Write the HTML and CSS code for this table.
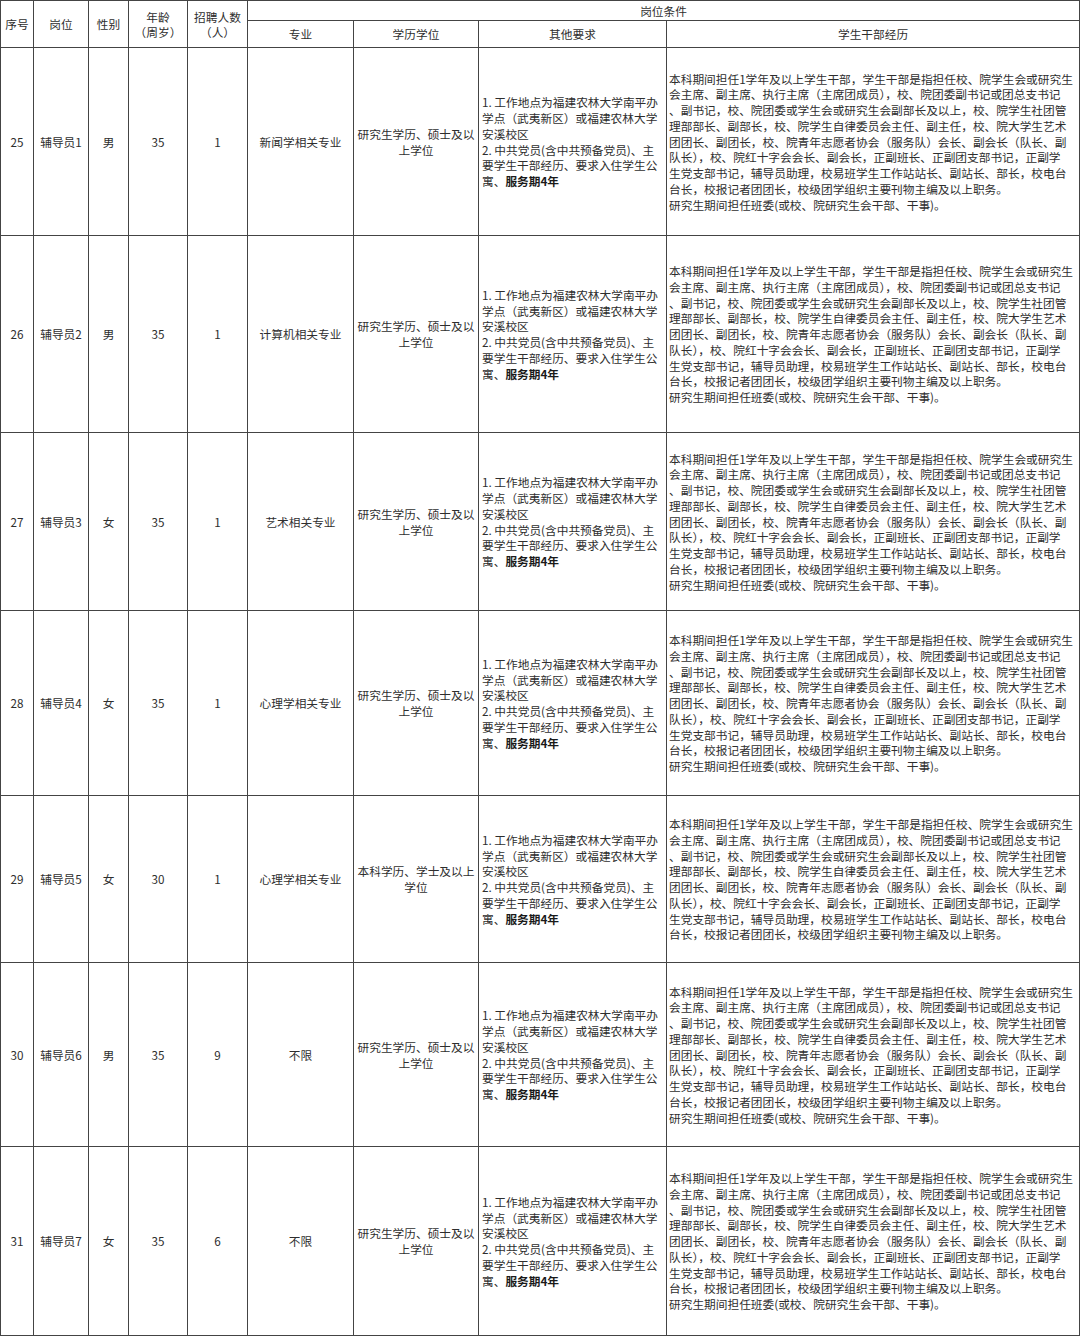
FILE: index.html
```html
<!DOCTYPE html>
<html lang="zh-CN">
<head>
<meta charset="utf-8">
<title>岗位表</title>
<link rel="stylesheet" href="styles.css">
</head>
<body>
<table class="jobs">
  <colgroup>
    <col class="c-no"><col class="c-post"><col class="c-sex"><col class="c-age"><col class="c-num">
    <col class="c-major"><col class="c-edu"><col class="c-other"><col class="c-exp">
  </colgroup>
  <thead>
    <tr class="h1">
      <th rowspan="2">序号</th>
      <th rowspan="2">岗位</th>
      <th rowspan="2">性别</th>
      <th rowspan="2" class="two">年龄<br>（周岁）</th>
      <th rowspan="2" class="two">招聘人数<br>（人）</th>
      <th colspan="4" class="group">岗位条件</th>
    </tr>
    <tr class="h2">
      <th>专业</th>
      <th>学历学位</th>
      <th>其他要求</th>
      <th>学生干部经历</th>
    </tr>
  </thead>
  <tbody>
    <tr class="r25">
      <td>25</td><td>辅导员1</td><td>男</td><td>35</td><td>1</td>
      <td>新闻学相关专业</td>
      <td>研究生学历、硕士及以<br>上学位</td>
      <td class="other">1. 工作地点为福建农林大学南平办<br>学点（武夷新区）或福建农林大学<br>安溪校区<br>2. 中共党员(含中共预备党员)、主<br>要学生干部经历、要求入住学生公<br>寓、<b>服务期4年</b></td>
      <td class="exp">本科期间担任1学年及以上学生干部，学生干部是指担任校、院学生会或研究生<br>会主席、副主席、执行主席（主席团成员），校、院团委副书记或团总支书记<br>、副书记，校、院团委或学生会或研究生会副部长及以上，校、院学生社团管<br>理部部长、副部长，校、院学生自律委员会主任、副主任，校、院大学生艺术<br>团团长、副团长，校、院青年志愿者协会（服务队）会长、副会长（队长、副<br>队长），校、院红十字会会长、副会长，正副班长、正副团支部书记，正副学<br>生党支部书记，辅导员助理，校易班学生工作站站长、副站长、部长，校电台<br>台长，校报记者团团长，校级团学组织主要刊物主编及以上职务。<br>研究生期间担任班委(或校、院研究生会干部、干事)。</td>
    </tr>
    <tr class="r26">
      <td>26</td><td>辅导员2</td><td>男</td><td>35</td><td>1</td>
      <td>计算机相关专业</td>
      <td>研究生学历、硕士及以<br>上学位</td>
      <td class="other">1. 工作地点为福建农林大学南平办<br>学点（武夷新区）或福建农林大学<br>安溪校区<br>2. 中共党员(含中共预备党员)、主<br>要学生干部经历、要求入住学生公<br>寓、<b>服务期4年</b></td>
      <td class="exp">本科期间担任1学年及以上学生干部，学生干部是指担任校、院学生会或研究生<br>会主席、副主席、执行主席（主席团成员），校、院团委副书记或团总支书记<br>、副书记，校、院团委或学生会或研究生会副部长及以上，校、院学生社团管<br>理部部长、副部长，校、院学生自律委员会主任、副主任，校、院大学生艺术<br>团团长、副团长，校、院青年志愿者协会（服务队）会长、副会长（队长、副<br>队长），校、院红十字会会长、副会长，正副班长、正副团支部书记，正副学<br>生党支部书记，辅导员助理，校易班学生工作站站长、副站长、部长，校电台<br>台长，校报记者团团长，校级团学组织主要刊物主编及以上职务。<br>研究生期间担任班委(或校、院研究生会干部、干事)。</td>
    </tr>
    <tr class="r27">
      <td>27</td><td>辅导员3</td><td>女</td><td>35</td><td>1</td>
      <td>艺术相关专业</td>
      <td>研究生学历、硕士及以<br>上学位</td>
      <td class="other">1. 工作地点为福建农林大学南平办<br>学点（武夷新区）或福建农林大学<br>安溪校区<br>2. 中共党员(含中共预备党员)、主<br>要学生干部经历、要求入住学生公<br>寓、<b>服务期4年</b></td>
      <td class="exp">本科期间担任1学年及以上学生干部，学生干部是指担任校、院学生会或研究生<br>会主席、副主席、执行主席（主席团成员），校、院团委副书记或团总支书记<br>、副书记，校、院团委或学生会或研究生会副部长及以上，校、院学生社团管<br>理部部长、副部长，校、院学生自律委员会主任、副主任，校、院大学生艺术<br>团团长、副团长，校、院青年志愿者协会（服务队）会长、副会长（队长、副<br>队长），校、院红十字会会长、副会长，正副班长、正副团支部书记，正副学<br>生党支部书记，辅导员助理，校易班学生工作站站长、副站长、部长，校电台<br>台长，校报记者团团长，校级团学组织主要刊物主编及以上职务。<br>研究生期间担任班委(或校、院研究生会干部、干事)。</td>
    </tr>
    <tr class="r28">
      <td>28</td><td>辅导员4</td><td>女</td><td>35</td><td>1</td>
      <td>心理学相关专业</td>
      <td>研究生学历、硕士及以<br>上学位</td>
      <td class="other">1. 工作地点为福建农林大学南平办<br>学点（武夷新区）或福建农林大学<br>安溪校区<br>2. 中共党员(含中共预备党员)、主<br>要学生干部经历、要求入住学生公<br>寓、<b>服务期4年</b></td>
      <td class="exp">本科期间担任1学年及以上学生干部，学生干部是指担任校、院学生会或研究生<br>会主席、副主席、执行主席（主席团成员），校、院团委副书记或团总支书记<br>、副书记，校、院团委或学生会或研究生会副部长及以上，校、院学生社团管<br>理部部长、副部长，校、院学生自律委员会主任、副主任，校、院大学生艺术<br>团团长、副团长，校、院青年志愿者协会（服务队）会长、副会长（队长、副<br>队长），校、院红十字会会长、副会长，正副班长、正副团支部书记，正副学<br>生党支部书记，辅导员助理，校易班学生工作站站长、副站长、部长，校电台<br>台长，校报记者团团长，校级团学组织主要刊物主编及以上职务。<br>研究生期间担任班委(或校、院研究生会干部、干事)。</td>
    </tr>
    <tr class="r29">
      <td>29</td><td>辅导员5</td><td>女</td><td>30</td><td>1</td>
      <td>心理学相关专业</td>
      <td>本科学历、学士及以上<br>学位</td>
      <td class="other">1. 工作地点为福建农林大学南平办<br>学点（武夷新区）或福建农林大学<br>安溪校区<br>2. 中共党员(含中共预备党员)、主<br>要学生干部经历、要求入住学生公<br>寓、<b>服务期4年</b></td>
      <td class="exp">本科期间担任1学年及以上学生干部，学生干部是指担任校、院学生会或研究生<br>会主席、副主席、执行主席（主席团成员），校、院团委副书记或团总支书记<br>、副书记，校、院团委或学生会或研究生会副部长及以上，校、院学生社团管<br>理部部长、副部长，校、院学生自律委员会主任、副主任，校、院大学生艺术<br>团团长、副团长，校、院青年志愿者协会（服务队）会长、副会长（队长、副<br>队长），校、院红十字会会长、副会长，正副班长、正副团支部书记，正副学<br>生党支部书记，辅导员助理，校易班学生工作站站长、副站长、部长，校电台<br>台长，校报记者团团长，校级团学组织主要刊物主编及以上职务。</td>
    </tr>
    <tr class="r30">
      <td>30</td><td>辅导员6</td><td>男</td><td>35</td><td>9</td>
      <td>不限</td>
      <td>研究生学历、硕士及以<br>上学位</td>
      <td class="other">1. 工作地点为福建农林大学南平办<br>学点（武夷新区）或福建农林大学<br>安溪校区<br>2. 中共党员(含中共预备党员)、主<br>要学生干部经历、要求入住学生公<br>寓、<b>服务期4年</b></td>
      <td class="exp">本科期间担任1学年及以上学生干部，学生干部是指担任校、院学生会或研究生<br>会主席、副主席、执行主席（主席团成员），校、院团委副书记或团总支书记<br>、副书记，校、院团委或学生会或研究生会副部长及以上，校、院学生社团管<br>理部部长、副部长，校、院学生自律委员会主任、副主任，校、院大学生艺术<br>团团长、副团长，校、院青年志愿者协会（服务队）会长、副会长（队长、副<br>队长），校、院红十字会会长、副会长，正副班长、正副团支部书记，正副学<br>生党支部书记，辅导员助理，校易班学生工作站站长、副站长、部长，校电台<br>台长，校报记者团团长，校级团学组织主要刊物主编及以上职务。<br>研究生期间担任班委(或校、院研究生会干部、干事)。</td>
    </tr>
    <tr class="r31">
      <td>31</td><td>辅导员7</td><td>女</td><td>35</td><td>6</td>
      <td>不限</td>
      <td>研究生学历、硕士及以<br>上学位</td>
      <td class="other">1. 工作地点为福建农林大学南平办<br>学点（武夷新区）或福建农林大学<br>安溪校区<br>2. 中共党员(含中共预备党员)、主<br>要学生干部经历、要求入住学生公<br>寓、<b>服务期4年</b></td>
      <td class="exp">本科期间担任1学年及以上学生干部，学生干部是指担任校、院学生会或研究生<br>会主席、副主席、执行主席（主席团成员），校、院团委副书记或团总支书记<br>、副书记，校、院团委或学生会或研究生会副部长及以上，校、院学生社团管<br>理部部长、副部长，校、院学生自律委员会主任、副主任，校、院大学生艺术<br>团团长、副团长，校、院青年志愿者协会（服务队）会长、副会长（队长、副<br>队长），校、院红十字会会长、副会长，正副班长、正副团支部书记，正副学<br>生党支部书记，辅导员助理，校易班学生工作站站长、副站长、部长，校电台<br>台长，校报记者团团长，校级团学组织主要刊物主编及以上职务。<br>研究生期间担任班委(或校、院研究生会干部、干事)。</td>
    </tr>
  </tbody>
</table>
</body>
</html>
```

FILE: styles.css
```css
html, body {
  margin: 0;
  padding: 0;
  background: #ffffff;
}

body {
  font-family: "Noto Sans CJK SC", "DejaVu Sans", sans-serif;
  font-size: 11.7px;
  color: #2e2e2e;
}

.jobs {
  border-collapse: collapse;
  table-layout: fixed;
  width: 1079px;
  margin: 0;
}

.c-no { width: 33px; }
.c-post { width: 55px; }
.c-sex { width: 40px; }
.c-age { width: 59px; }
.c-num { width: 60px; }
.c-major { width: 106px; }
.c-edu { width: 125px; }
.c-other { width: 188px; }
.c-exp { width: 413px; }

.jobs th,
.jobs td {
  border: 1px solid #444444;
  padding: 0 2px;
  text-align: center;
  vertical-align: middle;
  line-height: 15.75px;
  font-weight: normal;
  overflow: hidden;
}

.jobs th.two {
  line-height: 15.5px;
}

.jobs th.group {
  line-height: 14px;
}

.jobs .other,
.jobs .exp {
  text-align: left;
  white-space: nowrap;
  padding-left: 3px;
  padding-right: 0;
}

.jobs .exp {
  padding-left: 2px;
}

.jobs b {
  font-weight: bold;
  color: #1a1a1a;
}

.h1 { height: 20px; }
.h2 { height: 27px; }

.r25 { height: 188px; }
.r26 { height: 197px; }
.r27 { height: 178px; }
.r28 { height: 185px; }
.r29 { height: 167px; }
.r30 { height: 184px; }
.r31 { height: 189px; }
```
